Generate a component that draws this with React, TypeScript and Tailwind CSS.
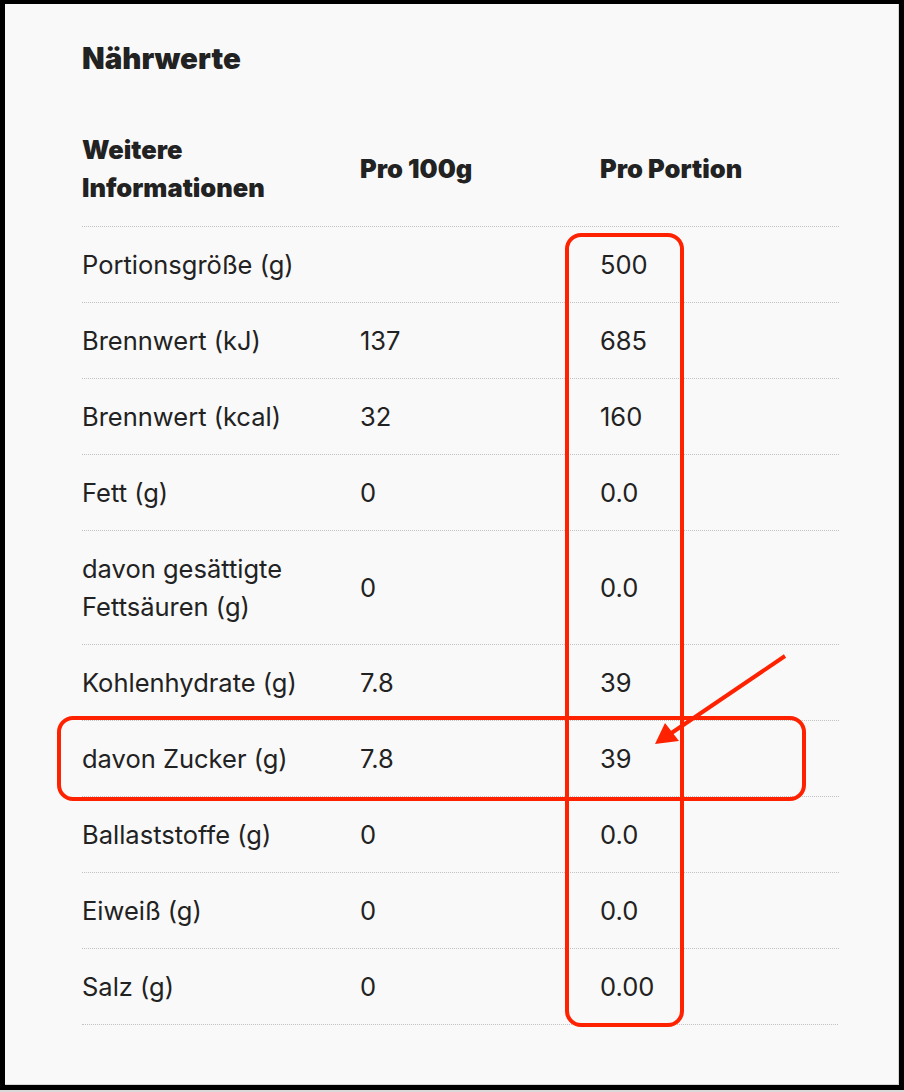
import React from "react";

type Row = { label: string[]; a: string; b: string };

const rows: Row[] = [
  { label: ["Portionsgröße (g)"], a: "", b: "500" },
  { label: ["Brennwert (kJ)"], a: "137", b: "685" },
  { label: ["Brennwert (kcal)"], a: "32", b: "160" },
  { label: ["Fett (g)"], a: "0", b: "0.0" },
  { label: ["davon gesättigte", "Fettsäuren (g)"], a: "0", b: "0.0" },
  { label: ["Kohlenhydrate (g)"], a: "7.8", b: "39" },
  { label: ["davon Zucker (g)"], a: "7.8", b: "39" },
  { label: ["Ballaststoffe (g)"], a: "0", b: "0.0" },
  { label: ["Eiweiß (g)"], a: "0", b: "0.0" },
  { label: ["Salz (g)"], a: "0", b: "0.00" },
];

export default function App() {
  return (
    <div className="w-[904px] h-[1092px] bg-[#d9d9d9] pb-[2px]">
      <div
        className="relative w-[904px] h-[1090px] bg-[#f9f9f9] border-t-4 border-l-[5px] border-r-[5px] border-b-[5px] border-black text-[#222222] overflow-hidden"
        style={{ fontFamily: "Inter, 'Noto Sans', sans-serif" }}
      >
        <div className="absolute right-0 top-0 bottom-0 w-px bg-[#d6d6d6]" />
        <div className="absolute left-0 right-0 bottom-0 h-px bg-[#d6d6d6]" />
        <div className="pl-[77px] pt-[36px] w-[834px]">
          <h1 className="text-[29.5px] leading-[36px] font-black">Nährwerte</h1>
          <div className="mt-[55px] grid grid-cols-[278px_240px_238px] items-center pb-[19px] text-[25.5px] leading-[38px] font-black">
            <div>
              <div>Weitere</div>
              <div>Informationen</div>
            </div>
            <div>Pro 100g</div>
            <div>Pro Portion</div>
          </div>
          {rows.map((r, i) => (
            <div
              key={i}
              className="grid grid-cols-[278px_240px_238px] items-center pt-[19px] pb-[18px] border-t border-dotted border-[#c2c2c2] text-[25.5px] leading-[38px]"
            >
              <div>
                {r.label.map((l, j) => (
                  <div key={j}>{l}</div>
                ))}
              </div>
              <div>{r.a}</div>
              <div>{r.b}</div>
            </div>
          ))}
          <div className="border-t border-dotted border-[#c2c2c2] w-[756px]" />
        </div>

        {/* annotations */}
        <div className="absolute left-[560px] top-[229px] w-[119px] h-[794px] rounded-[16px] border-[4px] border-[#ff2200]" />
        <div className="absolute left-[52px] top-[712px] w-[749px] h-[85px] rounded-[16px] border-[4px] border-[#ff2200]" />
        <svg className="absolute left-[-5px] top-[-4px]" width="904" height="1092" viewBox="0 0 904 1092">
          <line x1="785" y1="656" x2="670" y2="734" stroke="#ff2200" strokeWidth="4" />
          <polygon points="655,744 665,723 679,741" fill="#ff2200" />
        </svg>
      </div>
    </div>
  );
}
